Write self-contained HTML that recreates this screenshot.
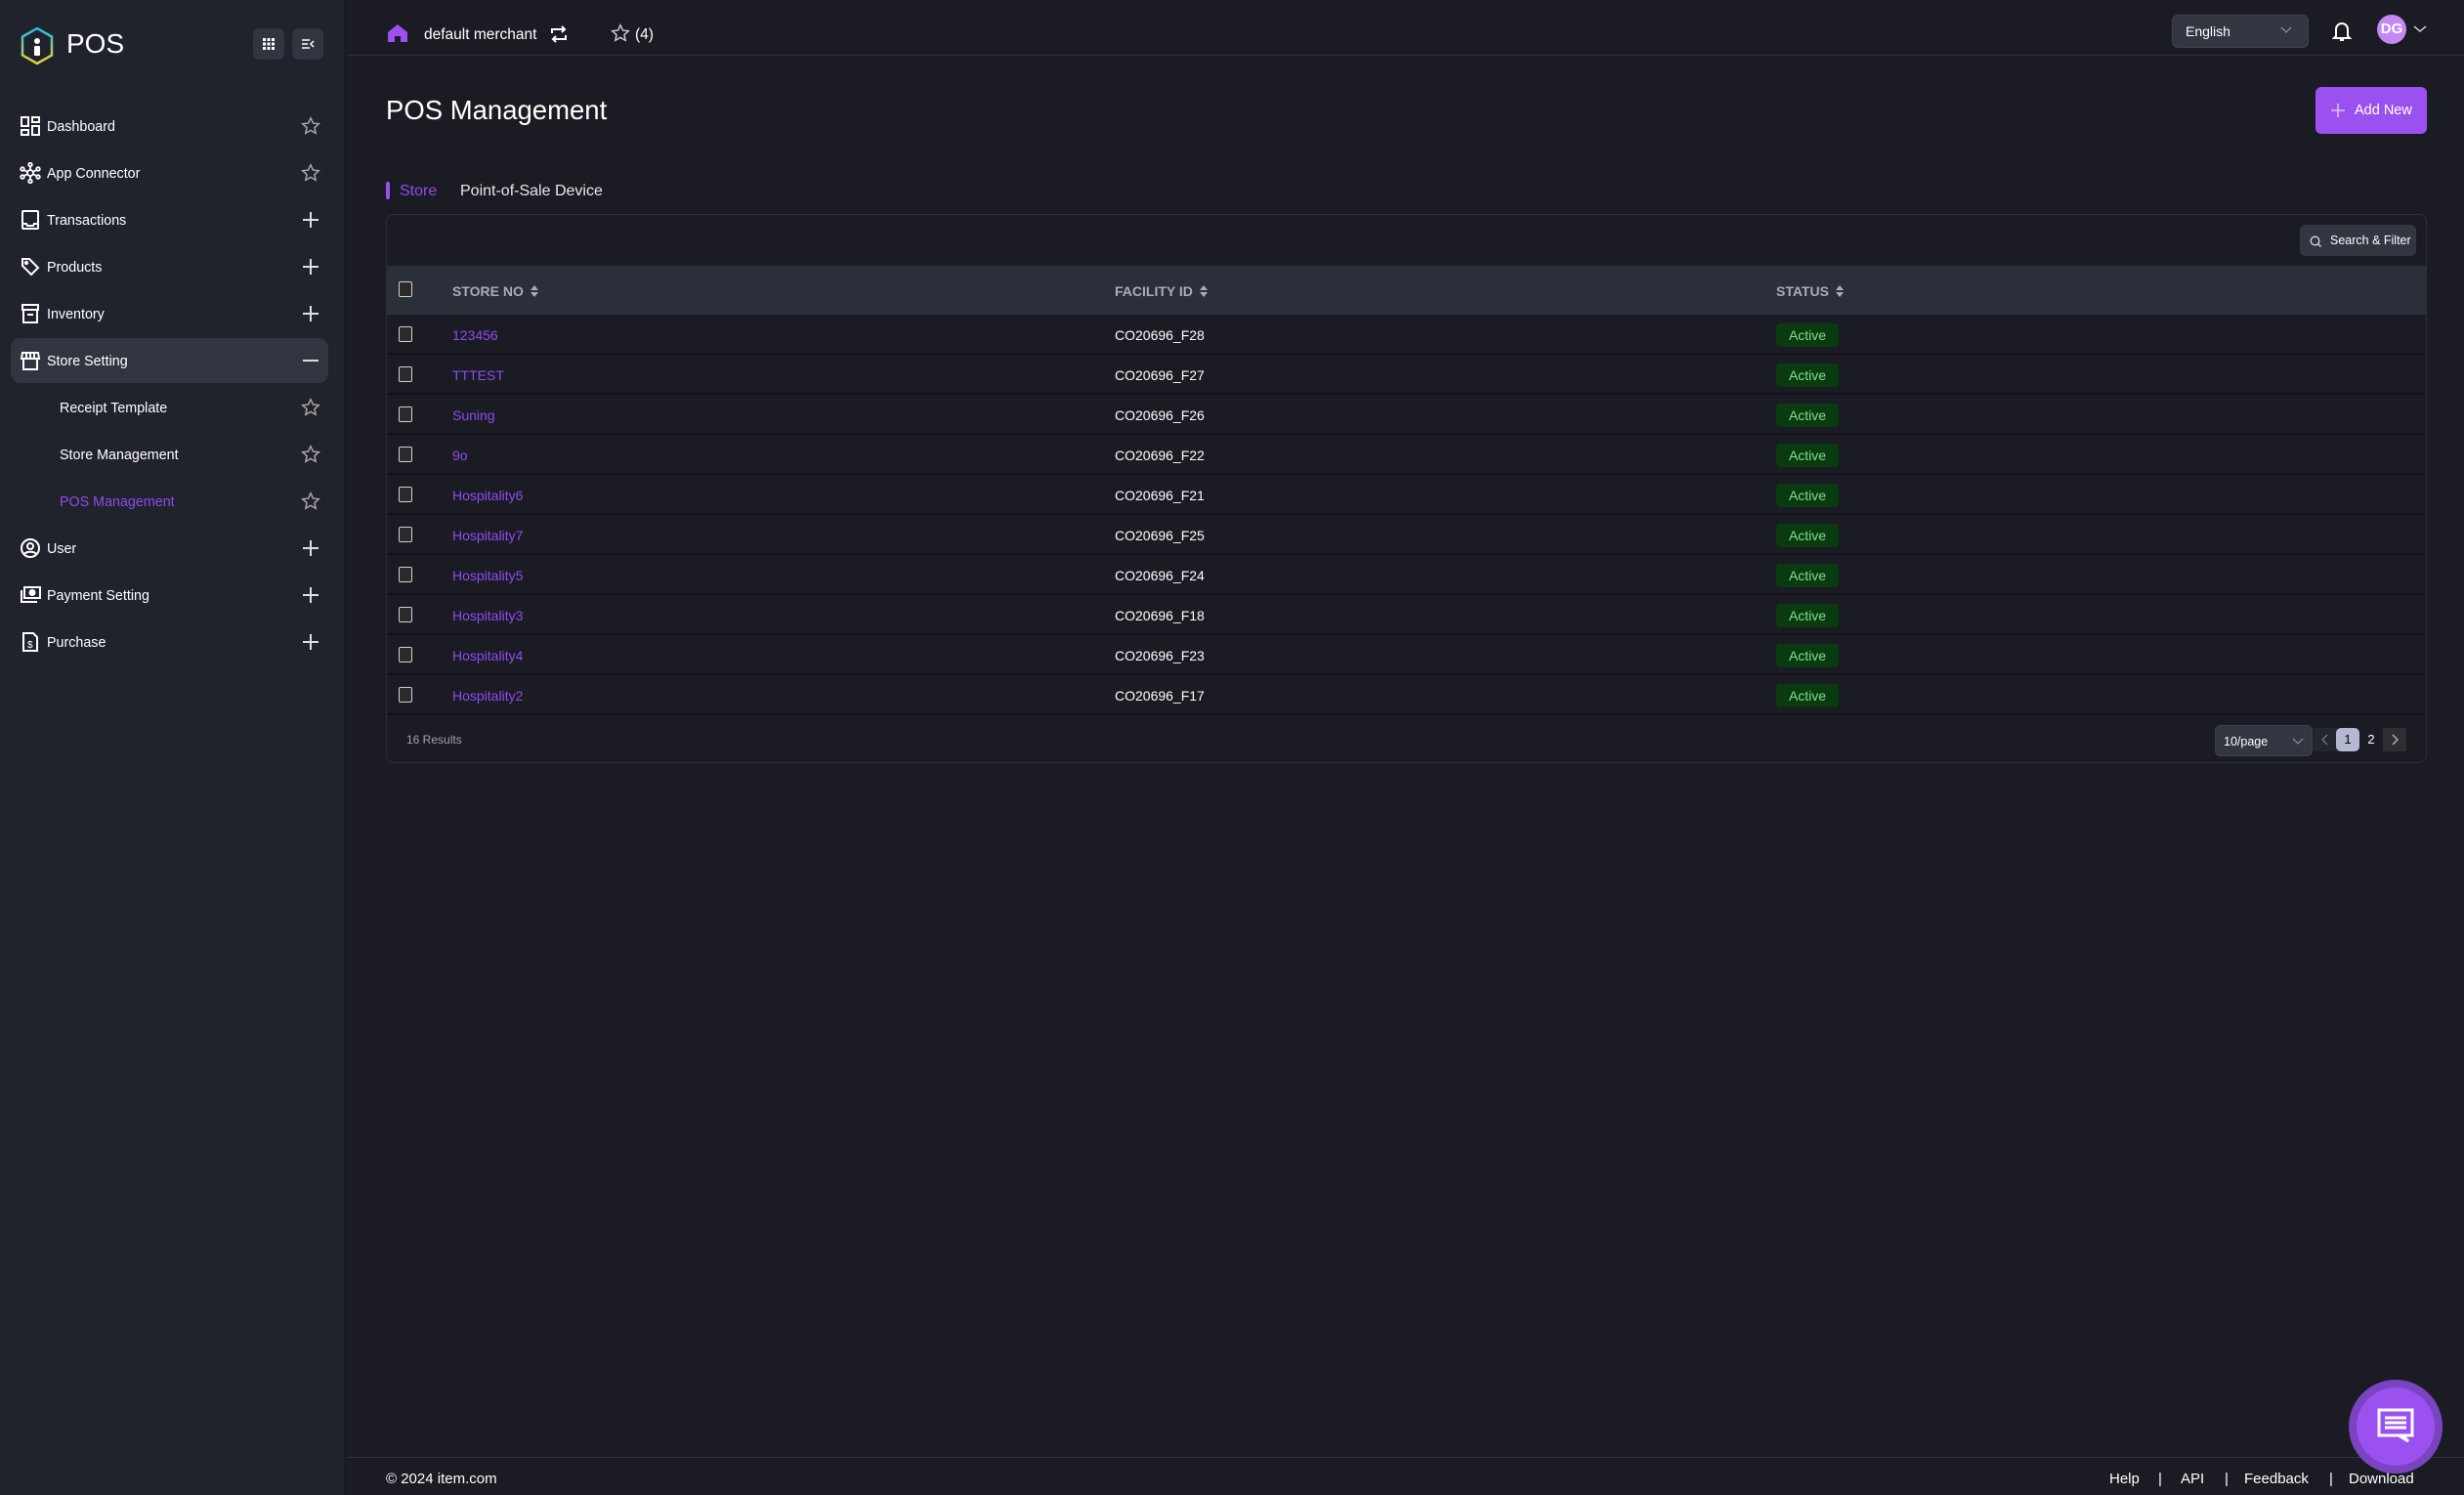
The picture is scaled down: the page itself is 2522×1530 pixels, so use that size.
<!DOCTYPE html>
<html><head><meta charset="utf-8"><style>
*{box-sizing:border-box;margin:0;padding:0}
body{width:2522px;height:1530px;background:#1b1c23;font-family:"Liberation Sans",sans-serif;color:#fff;position:relative;overflow:hidden}
.a{position:absolute}
#side{left:0;top:0;width:354px;height:1530px;background:#20232b;border-right:2px solid #181a1f}
.nav{position:absolute;left:0;width:354px;height:46px;display:flex;align-items:center;font-size:14.3px}
.nav svg.i{position:absolute;left:20px;width:22px;height:22px}
.nav .t{position:absolute;left:48px;top:16px}
.nav .r{position:absolute;left:307px;width:22px;height:22px}
.sub .t{left:61px}
.th{position:absolute;top:273px;height:50px;display:flex;align-items:center;font-size:14px;font-weight:bold;color:#a9adb8}
.row{position:absolute;left:396px;width:2087px;height:41px;border-bottom:2px solid #121318}
.row span{position:absolute;top:13px;font-size:14px}
.cb{position:absolute;left:12px;width:14px;height:16px;border:1.5px solid #d0d0d0;border-radius:2px;background:#2a2a2a}
.badge{position:absolute;left:1422px;top:9px;width:64px;height:24px;background:#0a3a0f;color:#7ee08f;border-radius:4px;font-size:14px;text-align:center;line-height:24px}
.lk{color:#8e4af0}
.ft{position:absolute;top:1505px;font-size:15px}
</style></head><body>
<div id="side" class="a">
  <svg class="a" style="left:20px;top:27px" width="36" height="40" viewBox="0 0 36 40"><defs><linearGradient id="g" x1="0" y1="0" x2="0" y2="1"><stop offset="0" stop-color="#22b8e8"/><stop offset="1" stop-color="#e8d53a"/></linearGradient></defs><path d="M18 2 L33 10.5 V29.5 L18 38 L3 29.5 V10.5 Z" fill="none" stroke="url(#g)" stroke-width="2.5"/><circle cx="18" cy="15" r="3" fill="#fff"/><rect x="15" y="20" width="6" height="10" rx="1" fill="#fff"/></svg>
  <div class="a" style="left:68px;top:29px;font-size:28px">POS</div>
  <div class="a" style="left:259px;top:29px;width:32px;height:32px;background:#31353f;border-radius:7px"></div>
  <svg class="a" style="left:268px;top:38px" width="14" height="14"><g fill="#fff"><rect x="1" y="1" width="3" height="3"/><rect x="5.5" y="1" width="3" height="3"/><rect x="10" y="1" width="3" height="3"/><rect x="1" y="5.5" width="3" height="3"/><rect x="5.5" y="5.5" width="3" height="3"/><rect x="10" y="5.5" width="3" height="3"/><rect x="1" y="10" width="3" height="3"/><rect x="5.5" y="10" width="3" height="3"/><rect x="10" y="10" width="3" height="3"/></g></svg>
  <div class="a" style="left:299px;top:29px;width:32px;height:32px;background:#31353f;border-radius:7px"></div>
  <svg class="a" style="left:308px;top:39px" width="14" height="12"><path d="M1 2h8M1 6h6M1 10h8M13 3l-3 3 3 3" stroke="#fff" stroke-width="1.5" fill="none"/></svg>

  <div class="nav" style="top:106px"><svg class="i" viewBox="0 0 22 22" fill="none" stroke="#fff" stroke-width="2"><rect x="2" y="2" width="7" height="9"/><rect x="13" y="2" width="7" height="5"/><rect x="2" y="15" width="7" height="5"/><rect x="13" y="11" width="7" height="9"/></svg><span class="t">Dashboard</span><svg class="r" viewBox="0 0 24 24"><path d="M12 3l2.7 5.8 6.3.7-4.7 4.3 1.3 6.2L12 16.8 6.4 20l1.3-6.2L3 9.5l6.3-.7z" fill="none" stroke="#aaa" stroke-width="1.6"/></svg></div>
  <div class="nav" style="top:154px"><svg class="i" viewBox="0 0 22 22" fill="none" stroke="#fff" stroke-width="1.8"><circle cx="11" cy="11" r="3"/><circle cx="11" cy="2.5" r="1.8"/><circle cx="11" cy="19.5" r="1.8"/><circle cx="3" cy="7" r="1.8"/><circle cx="19" cy="7" r="1.8"/><circle cx="3" cy="15" r="1.8"/><circle cx="19" cy="15" r="1.8"/><path d="M11 4v4M11 14v4M4.5 8l4 2M17.5 8l-4 2M4.5 14l4-2M17.5 14l-4-2"/></svg><span class="t">App Connector</span><svg class="r" viewBox="0 0 24 24"><path d="M12 3l2.7 5.8 6.3.7-4.7 4.3 1.3 6.2L12 16.8 6.4 20l1.3-6.2L3 9.5l6.3-.7z" fill="none" stroke="#aaa" stroke-width="1.6"/></svg></div>
  <div class="nav" style="top:202px"><svg class="i" viewBox="0 0 22 22" fill="none" stroke="#fff" stroke-width="2"><rect x="3" y="2" width="16" height="18" rx="1"/><path d="M3 15h4l1 2h6l1-2h4"/></svg><span class="t">Transactions</span><svg class="r" viewBox="0 0 22 22"><path d="M11 3v16M3 11h16" stroke="#ddd" stroke-width="2"/></svg></div>
  <div class="nav" style="top:250px"><svg class="i" viewBox="0 0 22 22" fill="none" stroke="#fff" stroke-width="2"><path d="M3 3h7l9 9-7 7-9-9z"/><circle cx="7" cy="7" r="1.2"/></svg><span class="t">Products</span><svg class="r" viewBox="0 0 22 22"><path d="M11 3v16M3 11h16" stroke="#ddd" stroke-width="2"/></svg></div>
  <div class="nav" style="top:298px"><svg class="i" viewBox="0 0 22 22" fill="none" stroke="#fff" stroke-width="2"><rect x="3" y="2" width="16" height="5"/><rect x="4" y="7" width="14" height="13"/><path d="M8 12h6"/></svg><span class="t">Inventory</span><svg class="r" viewBox="0 0 22 22"><path d="M11 3v16M3 11h16" stroke="#ddd" stroke-width="2"/></svg></div>
  <div class="a" style="left:11px;top:346px;width:325px;height:46px;background:#31353f;border-radius:10px"></div>
  <div class="nav" style="top:346px"><svg class="i" viewBox="0 0 22 22" fill="none" stroke="#fff" stroke-width="2"><path d="M3 3h16l1 6H2z"/><path d="M4 9v11h14V9M7 3v6M11 3v6M15 3v6"/></svg><span class="t">Store Setting</span><svg class="r" viewBox="0 0 22 22"><path d="M3 11h16" stroke="#ddd" stroke-width="2"/></svg></div>
  <div class="nav sub" style="top:394px"><span class="t">Receipt Template</span><svg class="r" viewBox="0 0 24 24"><path d="M12 3l2.7 5.8 6.3.7-4.7 4.3 1.3 6.2L12 16.8 6.4 20l1.3-6.2L3 9.5l6.3-.7z" fill="none" stroke="#aaa" stroke-width="1.6"/></svg></div>
  <div class="nav sub" style="top:442px"><span class="t">Store Management</span><svg class="r" viewBox="0 0 24 24"><path d="M12 3l2.7 5.8 6.3.7-4.7 4.3 1.3 6.2L12 16.8 6.4 20l1.3-6.2L3 9.5l6.3-.7z" fill="none" stroke="#aaa" stroke-width="1.6"/></svg></div>
  <div class="nav sub" style="top:490px"><span class="t lk">POS Management</span><svg class="r" viewBox="0 0 24 24"><path d="M12 3l2.7 5.8 6.3.7-4.7 4.3 1.3 6.2L12 16.8 6.4 20l1.3-6.2L3 9.5l6.3-.7z" fill="none" stroke="#aaa" stroke-width="1.6"/></svg></div>
  <div class="nav" style="top:538px"><svg class="i" viewBox="0 0 22 22" fill="none" stroke="#fff" stroke-width="2"><circle cx="11" cy="11" r="9"/><circle cx="11" cy="9" r="3"/><path d="M5 17c2-3 10-3 12 0"/></svg><span class="t">User</span><svg class="r" viewBox="0 0 22 22"><path d="M11 3v16M3 11h16" stroke="#ddd" stroke-width="2"/></svg></div>
  <div class="nav" style="top:586px"><svg class="i" viewBox="0 0 22 22" fill="none" stroke="#fff" stroke-width="2"><rect x="5" y="3" width="16" height="11"/><circle cx="13" cy="8.5" r="2.5" fill="#fff"/><path d="M2 6v12h16"/></svg><span class="t">Payment Setting</span><svg class="r" viewBox="0 0 22 22"><path d="M11 3v16M3 11h16" stroke="#ddd" stroke-width="2"/></svg></div>
  <div class="nav" style="top:634px"><svg class="i" viewBox="0 0 22 22" fill="none" stroke="#fff" stroke-width="2"><path d="M4 2h10l4 4v14H4z"/><text x="8" y="17" font-size="10" fill="#fff" stroke="none" font-family="Liberation Sans">$</text></svg><span class="t">Purchase</span><svg class="r" viewBox="0 0 22 22"><path d="M11 3v16M3 11h16" stroke="#ddd" stroke-width="2"/></svg></div>
</div>

<!-- header -->
<div class="a" style="left:356px;top:56px;width:2166px;height:1px;background:#2f323b"></div>
<svg class="a" style="left:396px;top:24px" width="22" height="20" viewBox="0 0 22 20"><path d="M11 1L1 9v10h7v-6h6v6h7V9z" fill="#9b51f0"/></svg>
<div class="a" style="left:434px;top:27px;font-size:15.5px">default merchant</div>
<svg class="a" style="left:563px;top:25px" width="18" height="20" viewBox="0 0 18 20" fill="none" stroke="#fff" stroke-width="2"><path d="M2 9V5h13M12 2l3 3-3 3M16 11v4H3M6 18l-3-3 3-3"/></svg>
<svg class="a" style="left:624px;top:23px" width="22" height="22" viewBox="0 0 24 24"><path d="M12 3l2.7 5.8 6.3.7-4.7 4.3 1.3 6.2L12 16.8 6.4 20l1.3-6.2L3 9.5l6.3-.7z" fill="none" stroke="#ccc" stroke-width="1.6"/></svg>
<div class="a" style="left:650px;top:27px;font-size:15.5px">(4)</div>
<div class="a" style="left:2223px;top:15px;width:140px;height:34px;background:#323641;border:1px solid #3d414c;border-radius:6px;font-size:14px;padding:8px 13px">English</div>
<svg class="a" style="left:2334px;top:27px" width="12" height="8"><path d="M1 1l5 5 5-5" stroke="#888" fill="none" stroke-width="1.3"/></svg>
<svg class="a" style="left:2387px;top:20px" width="20" height="24" viewBox="0 0 20 24" fill="none" stroke="#fff" stroke-width="2"><path d="M4 17V10a6 6 0 0112 0v7l2 2H2z"/><path d="M8 21h4"/></svg>
<div class="a" style="left:2433px;top:15px;width:30px;height:30px;border-radius:50%;background:#c487f5;font-size:15px;font-weight:bold;text-align:center;line-height:30px">DG</div>
<svg class="a" style="left:2470px;top:26px" width="14" height="8"><path d="M1 1l6 5 6-5" stroke="#ddd" fill="none" stroke-width="1.4"/></svg>

<div class="a" style="left:395px;top:97px;font-size:27.5px">POS Management</div>
<div class="a" style="left:2370px;top:89px;width:114px;height:48px;background:#9b51f0;border-radius:6px;font-size:14.5px;padding:16px 0 0 40px">Add New</div>
<svg class="a" style="left:2386px;top:106px" width="14" height="14"><path d="M7 0v14M0 7h14" stroke="#d9c0fa" stroke-width="1.6"/></svg>

<div class="a" style="left:395px;top:186px;width:4px;height:18px;background:#9b51f0;border-radius:2px"></div>
<div class="a lk" style="left:409px;top:187px;font-size:16px">Store</div>
<div class="a" style="left:471px;top:187px;font-size:16px;color:#e8e8e8">Point-of-Sale Device</div>

<div class="a" style="left:395px;top:219px;width:2089px;height:562px;border:1px solid #2b2e36;border-radius:8px"></div>
<div class="a" style="left:2354px;top:230px;width:119px;height:32px;background:#323641;border-radius:6px;font-size:12.5px;padding:9px 0 0 31px">Search &amp; Filter</div>
<svg class="a" style="left:2364px;top:241px" width="12" height="12"><circle cx="5.5" cy="5.5" r="4.3" stroke="#ddd" fill="none" stroke-width="1.3"/><path d="M8.5 8.5l3 3" stroke="#ddd" stroke-width="1.3"/></svg>

<div class="a" style="left:396px;top:272px;width:2087px;height:50px;background:#2b2f39"></div>
<div class="cb" style="left:408px;top:288px"></div>
<div class="th" style="left:463px">STORE NO <svg width="10" height="14" style="margin-left:6px"><path d="M1 6l4-5 4 5zM1 8l4 5 4-5z" fill="#a9adb8"/></svg></div>
<div class="th" style="left:1141px">FACILITY ID <svg width="10" height="14" style="margin-left:6px"><path d="M1 6l4-5 4 5zM1 8l4 5 4-5z" fill="#a9adb8"/></svg></div>
<div class="th" style="left:1818px">STATUS <svg width="10" height="14" style="margin-left:6px"><path d="M1 6l4-5 4 5zM1 8l4 5 4-5z" fill="#a9adb8"/></svg></div>

<div class="row" style="top:322px"><div class="cb" style="top:12px"></div><span class="lk" style="left:67px">123456</span><span style="left:745px">CO20696_F28</span><div class="badge">Active</div></div>
<div class="row" style="top:363px"><div class="cb" style="top:12px"></div><span class="lk" style="left:67px">TTTEST</span><span style="left:745px">CO20696_F27</span><div class="badge">Active</div></div>
<div class="row" style="top:404px"><div class="cb" style="top:12px"></div><span class="lk" style="left:67px">Suning</span><span style="left:745px">CO20696_F26</span><div class="badge">Active</div></div>
<div class="row" style="top:445px"><div class="cb" style="top:12px"></div><span class="lk" style="left:67px">9o</span><span style="left:745px">CO20696_F22</span><div class="badge">Active</div></div>
<div class="row" style="top:486px"><div class="cb" style="top:12px"></div><span class="lk" style="left:67px">Hospitality6</span><span style="left:745px">CO20696_F21</span><div class="badge">Active</div></div>
<div class="row" style="top:527px"><div class="cb" style="top:12px"></div><span class="lk" style="left:67px">Hospitality7</span><span style="left:745px">CO20696_F25</span><div class="badge">Active</div></div>
<div class="row" style="top:568px"><div class="cb" style="top:12px"></div><span class="lk" style="left:67px">Hospitality5</span><span style="left:745px">CO20696_F24</span><div class="badge">Active</div></div>
<div class="row" style="top:609px"><div class="cb" style="top:12px"></div><span class="lk" style="left:67px">Hospitality3</span><span style="left:745px">CO20696_F18</span><div class="badge">Active</div></div>
<div class="row" style="top:650px"><div class="cb" style="top:12px"></div><span class="lk" style="left:67px">Hospitality4</span><span style="left:745px">CO20696_F23</span><div class="badge">Active</div></div>
<div class="row" style="top:691px"><div class="cb" style="top:12px"></div><span class="lk" style="left:67px">Hospitality2</span><span style="left:745px">CO20696_F17</span><div class="badge">Active</div></div>

<div class="a" style="left:416px;top:750px;font-size:12px;color:#a0a3ab">16 Results</div>
<div class="a" style="left:2267px;top:742px;width:100px;height:32px;background:#323641;border:1px solid #3d414c;border-radius:6px;font-size:12.5px;padding:9px 8px">10/page</div>
<svg class="a" style="left:2346px;top:755px" width="12" height="8"><path d="M1 1l5 5 5-5" stroke="#888" fill="none" stroke-width="1.3"/></svg>
<div class="a" style="left:2368px;top:745px;width:24px;height:24px;background:#23262d"></div>
<svg class="a" style="left:2376px;top:751px" width="8" height="12"><path d="M6 1L1 6l5 5" stroke="#777" fill="none" stroke-width="1.3"/></svg>
<div class="a" style="left:2391px;top:745px;width:24px;height:24px;background:#b4b8d0;border-radius:5px;color:#000;font-size:13px;text-align:center;line-height:24px">1</div>
<div class="a" style="left:2415px;top:745px;width:24px;height:24px;font-size:13px;text-align:center;line-height:24px">2</div>
<div class="a" style="left:2439px;top:745px;width:24px;height:24px;background:#2e2f33"></div>
<svg class="a" style="left:2448px;top:751px" width="8" height="12"><path d="M1 1l5 5-5 5" stroke="#bbb" fill="none" stroke-width="1.3"/></svg>

<div class="a" style="left:356px;top:1491px;width:2166px;height:1px;background:#2f333b"></div>
<div class="ft" style="left:395px">© 2024 item.com</div>
<div class="ft" style="left:2159px">Help</div>
<div class="ft" style="left:2209px">|</div>
<div class="ft" style="left:2232px">API</div>
<div class="ft" style="left:2277px">|</div>
<div class="ft" style="left:2297px">Feedback</div>
<div class="ft" style="left:2384px">|</div>
<div class="ft" style="left:2404px">Download</div>
<div class="a" style="left:2404px;top:1412px;width:96px;height:96px;border-radius:50%;background:#7a43c0"></div>
<div class="a" style="left:2412px;top:1420px;width:80px;height:80px;border-radius:50%;background:#9b51f0"></div>
<svg class="a" style="left:2433px;top:1441px" width="38" height="36" viewBox="0 0 38 36"><path d="M2 2h34v26H26l6 6-10-6H2z" fill="none" stroke="#fff" stroke-width="3"/><path d="M8 10h22M8 15h22M8 20h22" stroke="#fff" stroke-width="3"/></svg>
</body></html>
